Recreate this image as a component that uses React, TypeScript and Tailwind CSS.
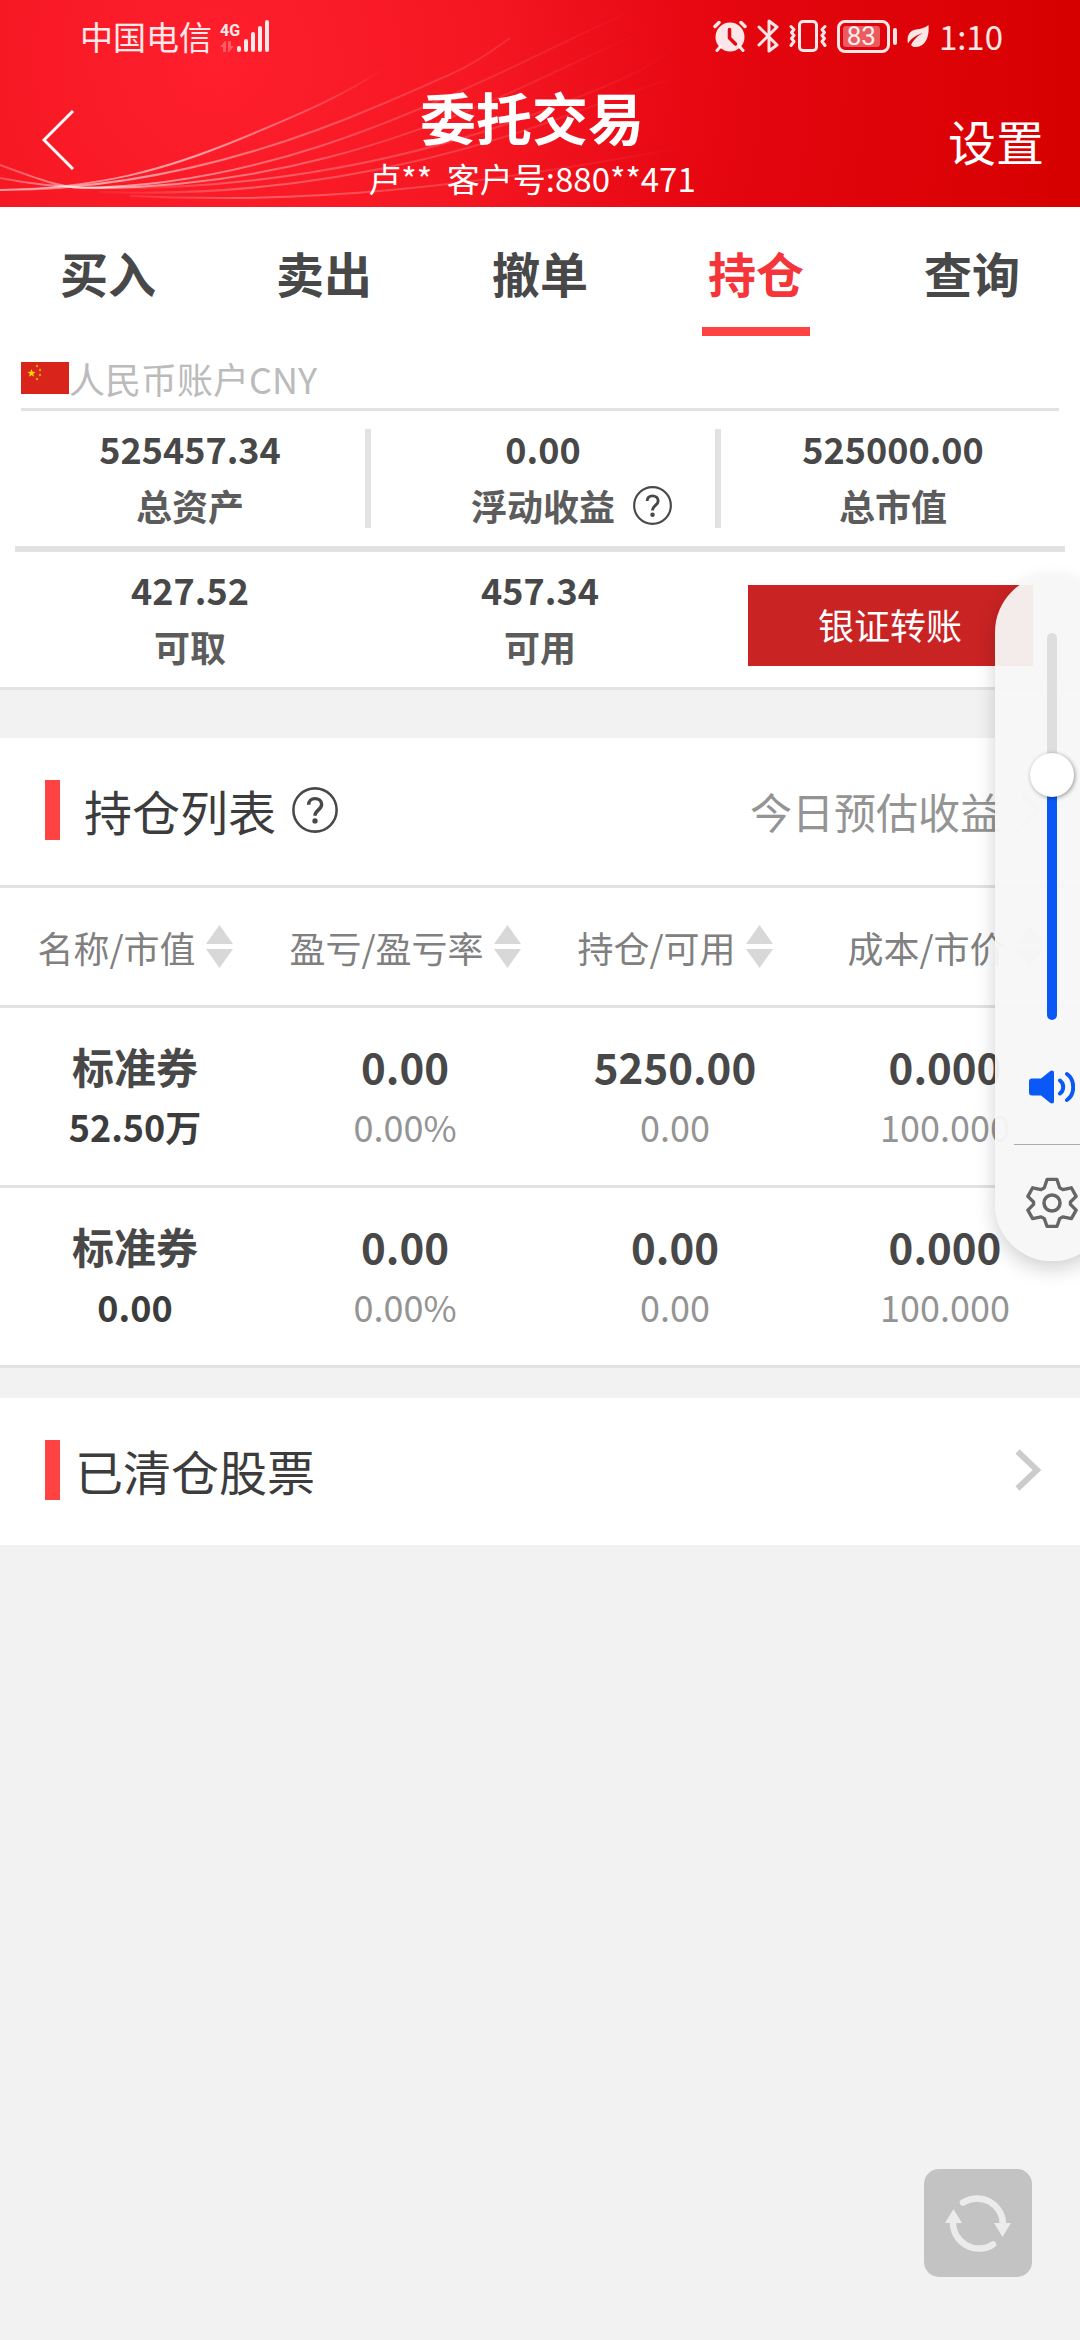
import React, { useState } from 'react';

interface Holding {
  id: string;
  name: string;
  marketValue: string;
  profit: string;
  profitRate: string;
  amount: string;
  available: string;
  cost: string;
  price: string;
}

const TABS = ['买入', '卖出', '撤单', '持仓', '查询'];

const COLUMNS = ['名称/市值', '盈亏/盈亏率', '持仓/可用', '成本/市价'];

const HOLDINGS: Holding[] = [
  {
    id: 'h1',
    name: '标准券',
    marketValue: '52.50万',
    profit: '0.00',
    profitRate: '0.00%',
    amount: '5250.00',
    available: '0.00',
    cost: '0.000',
    price: '100.000',
  },
  {
    id: 'h2',
    name: '标准券',
    marketValue: '0.00',
    profit: '0.00',
    profitRate: '0.00%',
    amount: '0.00',
    available: '0.00',
    cost: '0.000',
    price: '100.000',
  },
];

// Icons
const SignalIcon = () => (
  <svg width="34" height="32" viewBox="0 0 34 32" fill="currentColor" aria-hidden="true">
    <rect x="1" y="26" width="4" height="6" rx="2" />
    <rect x="8" y="19" width="4" height="13" rx="2" />
    <rect x="15" y="12" width="4" height="20" rx="2" />
    <rect x="22" y="6" width="4" height="26" rx="2" />
    <rect x="29" y="0" width="4" height="32" rx="2" />
  </svg>
);

const DataArrowsIcon = () => (
  <svg width="14" height="11" viewBox="0 0 14 11" fill="currentColor" className="opacity-30" aria-hidden="true">
    <path d="M0 6 5 0h1v11H3V6zM8 0h3v5h3l-5 6H8z" />
  </svg>
);

const AlarmIcon = () => (
  <svg width="34" height="32" viewBox="0 0 34 32" aria-hidden="true">
    <circle cx="17" cy="17" r="14.5" fill="currentColor" />
    <path d="M2 6.5 6 2.5M32 6.5 28 2.5" stroke="currentColor" strokeWidth="3.5" strokeLinecap="round" />
    <path d="M7 27l-3 3.500M27 27l3 3.500" stroke="currentColor" strokeWidth="3" strokeLinecap="round" />
    <path d="M16.500 9.500V18l6 6" stroke="#e30710" strokeWidth="3.500" strokeLinecap="round" strokeLinejoin="round" fill="none" />
  </svg>
);

const BluetoothIcon = () => (
  <svg width="22" height="34" viewBox="0 0 22 34" fill="none" stroke="currentColor" strokeWidth="3" strokeLinecap="round" strokeLinejoin="round" aria-hidden="true">
    <path d="M2 8l18 18-8 6V2l8 6L2 26" />
  </svg>
);

const VibrateIcon = () => (
  <svg width="38" height="32" viewBox="0 0 38 32" fill="none" stroke="currentColor" strokeWidth="3" strokeLinecap="round" strokeLinejoin="round" aria-hidden="true">
    <rect x="10.500" y="1.500" width="17" height="29" rx="3.500" />
    <path d="M2 6.500l3 3-2.500 3 2.500 3-2.500 3 2.500 3-3 4M36 6.500l-3 3 2.500 3-2.500 3 2.500 3-2.500 3 3 4" />
  </svg>
);

const LeafIcon = () => (
  <svg width="22" height="24" viewBox="0 0 22 24" aria-hidden="true">
    <path d="M21.500 1C22.500 12 19 22.500 9 23c-2.500.2-4-.6-5-2 3-6 7-9.500 12-12C9.500 11 4.500 14 1 19.500-.5 12 2 7 9 5.500 14 4.800 18.500 4 21.500 1z" fill="currentColor" />
  </svg>
);

const HelpIcon = ({ size }: { size: number }) => (
  <svg width={size} height={size} viewBox="0 0 40 40" fill="none" stroke="#484848" aria-hidden="true">
    <circle cx="20" cy="20" r="18.800" strokeWidth="2.200" />
    <path d="M14.500 15.500c0-3.600 2.500-5.400 5.500-5.400s5.800 1.900 5.800 5.200c0 4.300-5.800 5-5.800 9.700" strokeWidth="3" />
    <circle cx="20" cy="29.500" r="2.300" fill="#484848" stroke="none" />
  </svg>
);

const SortIcon = () => (
  <svg width="27" height="43" viewBox="0 0 27 43" fill="#d8d8d8" aria-hidden="true">
    <path d="M13.500 0 27 19H0zM13.500 43 27 24H0z" />
  </svg>
);

const GearIcon = () => (
  <svg width="52" height="52" viewBox="0 0 52 52" fill="none" stroke="#666" strokeWidth="3.500" strokeLinejoin="round" aria-hidden="true">
    <circle cx="26" cy="26" r="8" />
    <path d="M20.800 1.500h10.400l2.900 8.800 3.300 1.900 9-1.900 5 9-6 6v2.500l6 6-5 9-9-1.900-3.300 1.900-2.900 8.200H20.800l-2.900-8.200-3.300-1.900-9 1.900-5-9 6-6v-2.500l-6-6 5-9 9 1.900 3.300-1.900z" transform="translate(1.300 1) scale(.95)" />
  </svg>
);

const SpeakerIcon = () => (
  <svg width="46" height="34" viewBox="0 0 46 34" aria-hidden="true">
    <path d="M3 8.500h9L21 1.200c2-1.400 4-.6 4 1.300v29c0 1.900-2 2.700-4 1.300l-9-7.300H3c-2 0-3-1-3-3v-11c0-2 1-3 3-3z" fill="#0a59f7" />
    <path d="M31 10.500c4.300 3.300 4.300 9.700 0 13M38 4c8.300 6 8.300 20 0 26" fill="none" stroke="#0a59f7" strokeWidth="4" strokeLinecap="round" />
  </svg>
);

const RefreshIcon = () => (
  <svg width="68" height="60" viewBox="0 0 68 60" aria-hidden="true">
    <path d="M19 9.500A26 26 0 0 1 59 31M49 51.500A26 26 0 0 1 9 28" fill="none" stroke="#ebebeb" strokeWidth="6.500" strokeLinecap="round" />
    <path d="M50 30h17l-8.500 14zM1 30h17L9.500 16z" fill="#ebebeb" />
  </svg>
);

// Thin light lines that sweep across the header
const HeaderLines = () => (
  <svg className="absolute left-0 top-0" width="720" height="207" viewBox="0 0 720 207" fill="none" aria-hidden="true">
    <defs>
      <linearGradient id="sweep" x1="0" y1="0" x2="720" y2="0" gradientUnits="userSpaceOnUse">
        <stop offset="0" stopColor="#fff" stopOpacity="0.25" />
        <stop offset="0.14" stopColor="#fff" stopOpacity="0.6" />
        <stop offset="0.32" stopColor="#fff" stopOpacity="0.4" />
        <stop offset="0.52" stopColor="#fff" stopOpacity="0.18" />
        <stop offset="0.9" stopColor="#fff" stopOpacity="0" />
      </linearGradient>
      <linearGradient id="sweepFaint" x1="0" y1="0" x2="720" y2="0" gradientUnits="userSpaceOnUse">
        <stop offset="0.1" stopColor="#fff" stopOpacity="0" />
        <stop offset="0.35" stopColor="#fff" stopOpacity="0.3" />
        <stop offset="0.95" stopColor="#fff" stopOpacity="0" />
      </linearGradient>
      <linearGradient id="sweepShort" x1="0" y1="0" x2="385" y2="0" gradientUnits="userSpaceOnUse">
        <stop offset="0" stopColor="#fff" stopOpacity="0.4" />
        <stop offset="0.5" stopColor="#fff" stopOpacity="0.6" />
        <stop offset="1" stopColor="#fff" stopOpacity="0" />
      </linearGradient>
    </defs>
    <path d="M0 190C100 188 165 170 240 139S345 94 385 68" stroke="url(#sweepShort)" strokeWidth="2" />
    <path d="M0 190C150 190 280 148 380 105S470 66 510 38" stroke="url(#sweep)" strokeWidth="2" />
    <path d="M0 165C40 180 60 187 82 188C250 186 400 122 540 54S620 20 650 4" stroke="url(#sweep)" strokeWidth="2" />
    <path d="M0 178C30 184 60 188 100 188C260 186 400 145 540 79S640 36 670 20" stroke="url(#sweep)" strokeWidth="2" />
    <path d="M40 187C230 196 400 165 540 112S650 60 690 36" stroke="url(#sweepFaint)" strokeWidth="2" />
    <path d="M100 192C260 198 420 170 560 118S660 84 690 76" stroke="url(#sweepFaint)" strokeWidth="2" />
    <path d="M130 196C300 204 460 190 700 144" stroke="url(#sweepFaint)" strokeWidth="2" />
  </svg>
);

const StatusBar = () => (
  <div className="flex h-[72px] items-center justify-between pl-20 pr-[77px] text-[33px] leading-none text-white/90">
    <div className="flex items-center gap-2">
      <span>中国电信</span>
      <div className="flex items-end">
        <div className="flex w-4 flex-col items-start">
          <span className="font-['Roboto'] text-base font-bold leading-5">4G</span>
          <DataArrowsIcon />
        </div>
        <SignalIcon />
      </div>
    </div>
    <div className="flex items-center gap-[10px]">
      <AlarmIcon />
      <BluetoothIcon />
      <VibrateIcon />
      <div className="flex items-center gap-[3px]">
        <div className="flex h-[33px] w-[53px] rounded-[8px] border-[3px] border-current p-[3px]">
          <span className="flex w-[37px] items-center justify-center overflow-visible rounded-[3px] bg-white/35 font-['Roboto'] text-[26px] leading-none">83</span>
        </div>
        <div className="h-[17px] w-1 rounded-[2px] bg-current" />
      </div>
      <LeafIcon />
      <span className="leading-[34px]">1:10</span>
    </div>
  </div>
);

const Header = () => (
  <header className="relative overflow-hidden bg-[radial-gradient(circle_at_20%_30%,#ff1f2d_0%,#f51722_30%,#e50610_58%,#d60000_100%)] text-white">
    <HeaderLines />
    <div className="relative">
      <StatusBar />
      <div className="flex h-[135px] items-center">
        <button aria-label="返回" className="w-[120px] pl-[42px]">
          <svg width="32" height="60" viewBox="0 0 32 60" fill="none" stroke="currentColor" strokeWidth="3">
            <path d="M31 1 2 30l29 29" />
          </svg>
        </button>
        <div className="flex flex-1 flex-col items-center gap-3 pt-1">
          <h1 className="text-[56px] font-bold leading-[60px]">委托交易</h1>
          <p className="whitespace-pre text-[33px] leading-10">卢**  客户号:880**471</p>
        </div>
        <button className="w-[136px] pr-9 text-right text-5xl">设置</button>
      </div>
    </div>
  </header>
);

const Stat = ({ value, label, help }: { value: string; label: string; help?: boolean }) => (
  <div className="flex flex-1 flex-col justify-center gap-[9px] pb-1 text-4xl font-bold leading-[48px]">
    <div className="text-center text-[#484848]">{value}</div>
    <div className="grid grid-cols-[1fr_auto_1fr] items-center gap-[18px] text-[#5c5c5c]">
      <span className="col-start-2">{label}</span>
      {help && (
        <button aria-label={`${label}说明`} className="justify-self-start">
          <HelpIcon size={39} />
        </button>
      )}
    </div>
  </div>
);

const AccountSummary = () => (
  <section className="border-b-[3px] border-[#e2e2e2] bg-white">
    <div className="mx-[21px] flex h-[75px] items-center border-b-[3px] border-[#e2e2e2] pt-3 text-4xl text-[#bbb]">
      <svg width="48" height="32" viewBox="0 0 48 32" aria-hidden="true">
        <rect width="48" height="32" fill="#d9241c" />
        <path d="m10.500 7 1.100 2.800 3 .1-2.400 1.900.9 2.900-2.600-1.700-2.500 1.700.8-2.900L6.500 9.900l3-.1z" fill="#ffde00" />
        <g fill="#f0a010">
          <circle cx="16" cy="4" r="1.200" />
          <circle cx="19" cy="8" r="1.200" />
          <circle cx="19" cy="13" r="1.200" />
          <circle cx="16" cy="17" r="1.200" />
        </g>
      </svg>
      <span>人民币账户CNY</span>
    </div>
    <div className="mx-[15px]">
      <div className="grid grid-cols-3 border-b-[6px] border-[#e2e2e2] py-[18px]">
        <div className="flex h-[99px]">
          <Stat value="525457.34" label="总资产" />
        </div>
        <div className="flex h-[99px] border-l-[6px] border-[#e2e2e2]">
          <Stat value="0.00" label="浮动收益" help />
        </div>
        <div className="flex h-[99px] border-l-[6px] border-[#e2e2e2]">
          <Stat value="525000.00" label="总市值" />
        </div>
      </div>
      <div className="grid h-[135px] grid-cols-3">
        <Stat value="427.52" label="可取" />
        <Stat value="457.34" label="可用" />
        <div className="flex items-center justify-center pt-3">
          <button className="h-[81px] w-[285px] bg-[#c92323] pb-1 text-4xl text-white">银证转账</button>
        </div>
      </div>
    </div>
  </section>
);

const Cell = ({ top, bottom, strong }: { top: string; bottom: string; strong?: boolean }) => (
  <td className="h-[180px] border-b-[3px] border-[#e2e2e2] p-0 pb-[2px] text-center leading-[60px]">
    <div className="text-[42px] font-bold text-[#484848]">{top}</div>
    <div className={strong ? 'text-4xl leading-[60px] font-bold text-[#3c3c3c]' : 'text-4xl leading-[60px] text-[#949494]'}>{bottom}</div>
  </td>
);

const HoldingsTable = () => (
  <table className="w-full table-fixed border-separate border-spacing-0">
    <thead>
      <tr>
        {COLUMNS.map((col) => (
          <th key={col} className="h-[120px] border-b-[3px] border-[#e2e2e2] p-0 font-normal">
            <button className="flex w-full items-center justify-center gap-[10px] whitespace-nowrap text-4xl text-[#808080]">
              {col}
              <SortIcon />
            </button>
          </th>
        ))}
      </tr>
    </thead>
    <tbody>
      {HOLDINGS.map((h) => (
        <tr key={h.id}>
          <Cell top={h.name} bottom={h.marketValue} strong />
          <Cell top={h.profit} bottom={h.profitRate} />
          <Cell top={h.amount} bottom={h.available} />
          <Cell top={h.cost} bottom={h.price} />
        </tr>
      ))}
    </tbody>
  </table>
);

// System volume panel, hangs over the right edge of the screen
const VolumePanel = () => {
  const [volume, setVolume] = useState(65);

  return (
    <aside className="fixed -right-[29px] top-[575px] flex w-[114px] flex-col items-center rounded-[57px] bg-[#f7f7f7]/95 pb-8 pt-[58px] shadow-[0_8px_20px_rgba(0,0,0,0.18)]">
      <input
        type="range"
        aria-label="音量"
        min={0}
        max={100}
        value={volume}
        onChange={(e) => setVolume(Number(e.target.value))}
        style={{ '--level': `${volume}%` } as React.CSSProperties}
        className="h-[387px] w-[10px] appearance-none rounded-full bg-[linear-gradient(to_top,#0a59f7_var(--level),#dedede_var(--level))] [direction:rtl] [writing-mode:vertical-lr] [&::-webkit-slider-runnable-track]:w-[10px] [&::-webkit-slider-thumb]:-ml-[17px] [&::-webkit-slider-thumb]:h-11 [&::-webkit-slider-thumb]:w-11 [&::-webkit-slider-thumb]:appearance-none [&::-webkit-slider-thumb]:rounded-full [&::-webkit-slider-thumb]:bg-white [&::-webkit-slider-thumb]:shadow-[1px_1px_4px_rgba(0,0,0,0.4)]"
      />
      <button aria-label="静音" className="mt-[50px]">
        <SpeakerIcon />
      </button>
      <div className="mt-10 h-px w-[76px] bg-[#aaa]" />
      <button aria-label="声音设置" className="mt-8">
        <GearIcon />
      </button>
    </aside>
  );
};

export default function App() {
  const [activeTab, setActiveTab] = useState('持仓');

  return (
    <div className="min-h-screen bg-[#f2f2f2] font-['Noto_Sans_CJK_SC',sans-serif]">
      <Header />

      <nav className="flex bg-white">
        {TABS.map((tab) => (
          <button
            key={tab}
            onClick={() => setActiveTab(tab)}
            className={`relative h-[129px] flex-1 text-5xl font-bold ${activeTab === tab ? 'text-[#f5353a]' : 'text-[#484848]'}`}
          >
            {tab}
            {activeTab === tab && <span className="absolute bottom-0 left-1/4 h-[9px] w-1/2 bg-[#ff4343]" />}
          </button>
        ))}
      </nav>

      <AccountSummary />

      <section className="mt-12 bg-white">
        <div className="flex h-[150px] items-center border-b-[3px] border-[#e2e2e2] pb-[3px] pl-[45px] pr-10">
          <span className="h-[60px] w-[15px] bg-[#ff4343]" />
          <h2 className="ml-6 text-5xl text-[#3c3c3c]">持仓列表</h2>
          <button aria-label="持仓列表说明" className="ml-4">
            <HelpIcon size={46} />
          </button>
          <a href="#profit" className="ml-auto flex items-center gap-[18px] text-[42px] text-[#949494]">
            今日预估收益
            <svg width="20" height="36" viewBox="0 0 20 36" fill="none" stroke="#ccc" strokeWidth="4" aria-hidden="true">
              <path d="m2 2 16 16L2 34" />
            </svg>
          </a>
        </div>
        <HoldingsTable />
      </section>

      <a href="#cleared" className="mt-[30px] flex h-[147px] items-center bg-white pb-[3px] pl-[45px] pr-[38px]">
        <span className="h-[60px] w-[15px] bg-[#ff4343]" />
        <h2 className="ml-[15px] text-5xl text-[#3c3c3c]">已清仓股票</h2>
        <svg className="ml-auto" width="27" height="42" viewBox="0 0 27 42" fill="none" stroke="#ccc" strokeWidth="6" aria-hidden="true">
          <path d="m2.500 2.500 19.500 18.500L2.500 39.500" />
        </svg>
      </a>

      <button aria-label="刷新" className="fixed bottom-[63px] right-12 flex h-[108px] w-[108px] items-center justify-center rounded-[15px] bg-[#c3c3c3]">
        <RefreshIcon />
      </button>

      <VolumePanel />
    </div>
  );
}
